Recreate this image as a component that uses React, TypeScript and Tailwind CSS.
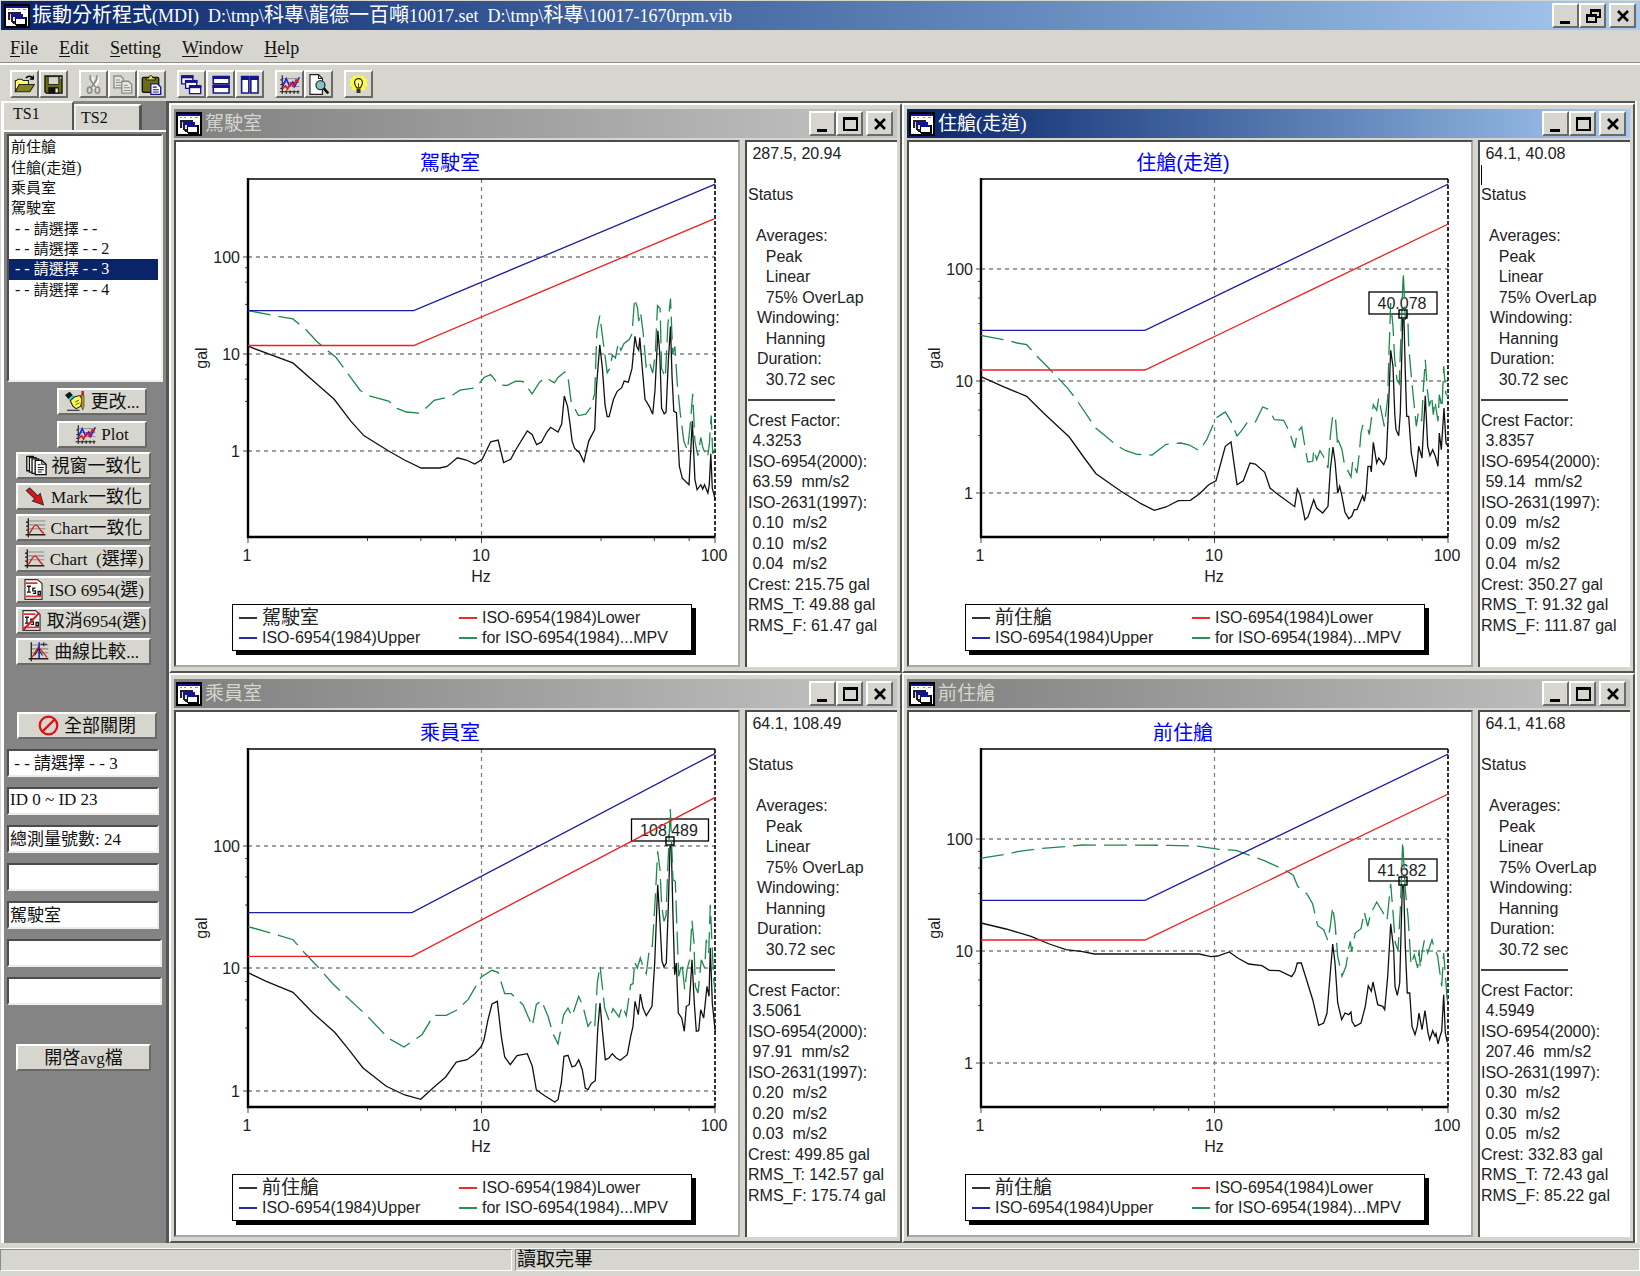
import React from "react";

const SERIF = "font-['Liberation_Serif','Noto_Sans_CJK_TC',serif]";
const SANS = "font-['Liberation_Sans','Noto_Sans_CJK_TC',sans-serif]";
const RAISED = "border-2 border-t-white border-l-white border-r-[#6a6a68] border-b-[#6a6a68] bg-[#d6d5ce]";
const SUNKEN = "border-2 border-t-[#4c4c4c] border-l-[#4c4c4c] border-r-[#eeede8] border-b-[#eeede8] bg-white";

/* Text whose Chinese runs are set a little larger than the Latin ones. */
function Mixed({ text, cjk }: { text: string; cjk: string }) {
  const parts = text.split(/([\u2e80-\u9fff]+)/);
  return (
    <span className="whitespace-pre">
      {parts.map((p, i) => (i % 2 ? <span key={i} className={cjk}>{p}</span> : p))}
    </span>
  );
}

/* ---------- icons ---------- */

function Icon16({ children, className = "size-[21px]" }: { children: React.ReactNode; className?: string }) {
  return (
    <svg viewBox="0 0 16 16" className={className + " shrink-0"} aria-hidden="true" fill="none">
      {children}
    </svg>
  );
}

function AppIcon() {
  return (
    <svg viewBox="0 0 26 24" className="h-6 w-[26px] shrink-0" aria-hidden="true" shapeRendering="crispEdges">
      <rect width="26" height="24" fill="#000" />
      <rect x="2" y="2" width="22" height="20" fill="#fff" />
      <rect x="2" y="2" width="22" height="2" fill="#14148c" />
      <path d="M4 5h2v1H4zM8 5h2v1H8zM14 5h2v1h-2zM19 5h3v1h-3z" fill="#8a8ab0" />
      <path d="M4 8h13v2H6v6H4z" fill="#222" />
      <rect x="6" y="10" width="12" height="6" fill="#ddd" />
      <path d="M7 10h12v3H7z" fill="#14148c" />
      <path d="M7 13h2v4h2v3H9l-2-3z" fill="#222" />
      <rect x="11" y="13" width="11" height="2" fill="#14148c" />
      <rect x="12" y="15" width="10" height="6" fill="#fff" />
      <path d="M11 15h1v6h-1zM21 13h2v9h-2zM12 20h10v2H12z" fill="#000" />
    </svg>
  );
}

const OpenIcon = () => (
  <Icon16>
    <path d="M1 13V5h1l1-1h3l1 1h4v3H5z" fill="#ffff66" stroke="#222" strokeWidth=".8" />
    <path d="M1 13.5 4 8h11.5l-3.5 5.5z" fill="#84841c" stroke="#222" strokeWidth=".8" />
    <path d="M9 3.2c1.500-2 4-2 5.200 0M14.700 1.200v2.600h-2.600" stroke="#000" strokeWidth="1" />
  </Icon16>
);
const SaveIcon = () => (
  <Icon16>
    <path d="M1.500 1.500h13v13h-12l-1-1z" fill="#6c6c10" stroke="#111" />
    <path d="M4 2h8v6H4z" fill="#d6d5ce" stroke="#111" strokeWidth=".6" />
    <path d="M4 10h8v5H4z" fill="#111" />
    <path d="M9.500 11h1.800v3H9.500zM13 2.500h1v1h-1z" fill="#eee" />
  </Icon16>
);
const CutIcon = () => (
  <Icon16>
    <path d="M6.500 1.500v3l3.500 6M10.500 1.500v3L7 10.500" stroke="#fff" strokeWidth="1.200" transform="translate(1 1)" />
    <path d="M5.500 1v3l4 6M10.500 1v3l-4 6" stroke="#8a8a88" strokeWidth="1.200" />
    <ellipse cx="5" cy="12.300" rx="1.700" ry="2.300" stroke="#8a8a88" strokeWidth="1.200" />
    <ellipse cx="11" cy="12.300" rx="1.700" ry="2.300" stroke="#8a8a88" strokeWidth="1.200" />
  </Icon16>
);
const CopyIcon = () => (
  <Icon16>
    <path d="M1.500 1.500h5l2 2v7h-7z" fill="#e6e6e2" stroke="#8a8a88" />
    <path d="M3 4.500h3M3 6.500h4M3 8.500h4" stroke="#8a8a88" strokeWidth=".8" />
    <path d="M7.500 5.500h5l2.500 2.500v6.500H7.500z" fill="#e6e6e2" stroke="#8a8a88" />
    <path d="M9 8.500h3M9 10.500h5M9 12.500h5" stroke="#8a8a88" strokeWidth=".8" />
  </Icon16>
);
const PasteIcon = () => (
  <Icon16>
    <rect x="1" y="2.500" width="12.500" height="11.500" rx="1" fill="#6c6c10" stroke="#111" />
    <path d="M4 4.500V3h2c0-2.400 3-2.400 3 0h2v1.500z" fill="#dede60" stroke="#111" strokeWidth=".7" />
    <path d="M7.500 7.500h5L15 10v5.500H7.500z" fill="#fff" stroke="#14148c" />
    <path d="M9 10h3M9 12h4.500M9 13.700h4.500" stroke="#14148c" strokeWidth=".8" />
  </Icon16>
);
const CascadeIcon = () => (
  <Icon16>
    <path d="M.500 1.500h8.500v6H.500z" fill="#fff" stroke="#14148c" />
    <path d="M0 1h9.500v2.300H0z" fill="#14148c" />
    <path d="M3.500 5h8.500v6H3.500z" fill="#fff" stroke="#14148c" />
    <path d="M3 4.500h9.500v2.300H3z" fill="#14148c" />
    <path d="M6.500 9H15v6H6.500z" fill="#fff" stroke="#14148c" />
    <path d="M6 8.500h9.500v2.300H6z" fill="#14148c" />
  </Icon16>
);
const TileHIcon = () => (
  <Icon16>
    <path d="M2.500 2h12v5.500h-12zM2.500 9h12v5.500h-12z" fill="#fff" stroke="#14148c" strokeWidth="1.200" />
    <path d="M2 1.500h13v2.400H2zM2 8.300h13v2.400H2z" fill="#14148c" />
  </Icon16>
);
const TileVIcon = () => (
  <Icon16>
    <path d="M2 2h5.500v12.500H2zM9 2h5.500v12.500H9z" fill="#fff" stroke="#14148c" strokeWidth="1.200" />
    <path d="M1.500 1.500H8V4.500H1.500zM8.500 1.500H15V4.500H8.500z" fill="#14148c" />
  </Icon16>
);
const PlotIcon = () => (
  <Icon16>
    <path d="M3 3.500h12.500M3 6.500h12.500M3 9.500h12.500" stroke="#8a8a88" strokeWidth=".7" />
    <path d="M2.500 1v14M.500 13.500h15M5.500 12.500v2.500M8.500 12.500v2.500M11.500 12.500v2.500M14.500 12.500v2.500M1 4.500h1.500M1 8h1.500M1 11h1.500" stroke="#222" strokeWidth=".9" />
    <path d="M3 9l2.500-5.500L8 9l2.500-3 1.500 3.500 3.500-7" stroke="#2222e0" strokeWidth="1.200" />
    <path d="M3 11l2-2 1.500 2.500L9 7l2 2.500 2-5 2 1" stroke="#e01818" strokeWidth="1.200" />
  </Icon16>
);
const PreviewIcon = () => (
  <Icon16>
    <path d="M1.500.500H8l3 3v12H1.500z" fill="#fff" stroke="#222" strokeWidth=".9" />
    <path d="M8 .500v3h3" stroke="#222" strokeWidth=".8" />
    <circle cx="9.500" cy="8.500" r="3.400" fill="#7fc4c8" stroke="#333" strokeWidth="1" />
    <path d="M12 11l3.500 3.800" stroke="#111" strokeWidth="2" />
  </Icon16>
);
const BulbIcon = () => (
  <Icon16>
    <path d="M8 0l1.500 2L12 .800l.300 2.500L15 4l-1.300 2.300L15.500 8.500l-2.500 1 .200 2.500-3 .500H6l-3-.500.200-2.500-2.500-1 1.800-2.200L1 4l2.700-.700L4 .800 6.500 2z" fill="#ffff30" />
    <path d="M6.500 10.500C6 9 5 8.500 5 6.500a3 3 0 0 1 6 0c0 2-1 2.500-1.500 4z" fill="#ffff80" stroke="#222" strokeWidth=".9" />
    <path d="M6.500 11h3v3.500h-3z" fill="#333" />
    <path d="M8 7v3.500" stroke="#333" strokeWidth=".7" />
  </Icon16>
);
const HandIcon = () => (
  <Icon16>
    <path d="M0 3l3.500-2.500L6 3 2.500 6z" fill="#111" />
    <path d="M2.500 6 6 3l1.500 1.500-3.500 3z" fill="#20c8d0" />
    <path d="M4 7.500 7.500 4.300l4-.800 1.500 3-1 5-3.500 2L6 11.500z" fill="#ffff50" stroke="#222" strokeWidth=".8" />
    <path d="M7.500 8.500l3-1.500M8 10.500l3-1.500" stroke="#222" strokeWidth=".6" />
    <path d="M12.500 0h2v3h-2z" fill="#d02020" />
    <path d="M12.500 3h2v9l-1 2.500-1-2.500z" fill="#c89018" stroke="#222" strokeWidth=".4" />
    <path d="M1.500 14.700H11" stroke="#222" strokeWidth=".8" />
  </Icon16>
);
const PagesIcon = () => (
  <Icon16>
    <path d="M.600 1h5v11h-5z" fill="#fff" stroke="#111" />
    <path d="M2.600 2h5v11h-5z" fill="#fff" stroke="#111" />
    <path d="M4.600 3h5v11h-5z" fill="#fff" stroke="#111" />
    <path d="M7 4h5l3.300 3v8H7z" fill="#fff" stroke="#111" />
    <path d="M12 4v3h3M9 7.500h2M9 9.500h4.500M9 11.300h4.500M9 13h3" stroke="#111" strokeWidth=".8" />
  </Icon16>
);
const ArrowIcon = () => (
  <Icon16>
    <path d="M1 3.500 3.500 1.500l6.300 6 1.800-1.800L14 14.500l-8.300-3 1.800-1.700z" fill="#e81010" stroke="#333" strokeWidth=".8" />
  </Icon16>
);
const ChartIcon = () => (
  <Icon16>
    <path d="M3 3h12.500M3 6h12.500M3 9h12.500" stroke="#8a8a88" strokeWidth=".8" />
    <path d="M2.500 1v14.500M.500 13.500h15M.800 4h1.500M.800 7h1.500M.800 10h1.500" stroke="#222" strokeWidth="1" />
    <path d="M3 12.500c2-1 3-6 5.200-6.300s3.300 5.300 6.300 6.300" stroke="#e02020" strokeWidth="1.100" />
  </Icon16>
);
const IsoIcon = ({ off = false }: { off?: boolean }) => (
  <Icon16>
    <path d="M1.500.500h9.500l3.500 3v12h-13z" fill="#fff" stroke="#333" strokeWidth=".9" />
    <path d="M2 3.200h9M2 13.200h12" stroke="#e03030" strokeWidth="1.300" />
    <path d="M3 5.500h3M4.500 5.500v4.500M3 10h3M9.500 7H7.500v2h2v2h-2M11.500 9.500h1.700V12h-1.700z" stroke="#111" strokeWidth="1" />
    {off && <path d="M2 15 14 2" stroke="#e01818" strokeWidth="1.600" />}
  </Icon16>
);
const CompareIcon = () => (
  <Icon16>
    <path d="M3 3h12.500M3 6h12.500M3 9h12.500" stroke="#8a8a88" strokeWidth=".8" />
    <path d="M2.500 1v14.500M.500 13.500h15" stroke="#222" strokeWidth="1" />
    <path d="M3 12.500 8 4.500l6.500 8" stroke="#e02020" strokeWidth="1.100" />
    <path d="M8.500 1v12" stroke="#2222e0" strokeWidth="1.200" />
    <path d="M9.500 2.500h5M12 1v3M5 11l3-5 3 5" stroke="#222" strokeWidth=".8" />
  </Icon16>
);
const BanIcon = () => (
  <Icon16>
    <circle cx="8" cy="8" r="6.700" stroke="#e01010" strokeWidth="1.700" />
    <path d="M3.500 12.500l9-9" stroke="#e01010" strokeWidth="1.700" />
  </Icon16>
);

/* ---------- caption buttons ---------- */

const CAPTION = "flex h-[25px] w-[27px] items-center justify-center " + RAISED;

function CaptionButtons({ restore = false }: { restore?: boolean }) {
  return (
    <div className="flex shrink-0 items-center">
      <button aria-label="Minimize" className={CAPTION}>
        <svg viewBox="0 0 18 18" className="size-[18px]" shapeRendering="crispEdges"><path d="M3 14h10v3H3z" /></svg>
      </button>
      <button aria-label={restore ? "Restore" : "Maximize"} className={CAPTION}>
        <svg viewBox="0 0 18 18" className="size-[18px]" shapeRendering="crispEdges" fillRule="evenodd">
          {restore ? (
            <path d="M6 2h11v9h-4V9h2V5H8v2H6zM2 7h11v9H2zM4 10v4h7v-4z" />
          ) : (
            <path d="M2 2h15v14H2zM4 5v9h11V5z" />
          )}
        </svg>
      </button>
      <button aria-label="Close" className={CAPTION + " ml-[3px]"}>
        <svg viewBox="0 0 18 18" className="size-[18px]"><path d="M4 4l10 10M14 4 4 14" stroke="#000" strokeWidth="2.600" /></svg>
      </button>
    </div>
  );
}

/* ---------- charts ---------- */

type Mark = { label: string; x: number; y: number; w: number };
type Series = { black: string; green: string; upper: string; lower: string };
type Win = {
  title: string;
  legend: string;
  active?: boolean;
  /* origin and scale of the trace coordinates */
  map: { x: number; y: number; sx: number; sy: number };
  decades: [number, number, number];
  mark?: Mark;
  series: Series;
  cursor: string;
  values: string[];
};

const W = 467;
const H = 358;
const DECADE = W / 2;
const MINOR = [3.25, 5.5, 7.75].map((v) => Math.log10(v));

function toPlot(points: string, m: Win["map"]) {
  return points
    .split(" ")
    .map((p) => {
      const [x, y] = p.split(",").map(Number);
      return `${((x - m.x) / m.sx).toFixed(1)},${((y - m.y) / m.sy).toFixed(1)}`;
    })
    .join(" ");
}

function Plot({ win }: { win: Win }) {
  const [y100, y10, y1] = win.decades;
  const step = y1 - y10;
  const minorY = [y100, y10, y1]
    .flatMap((base) => MINOR.map((f) => base - f * step))
    .filter((y) => y > y100 - 1);
  return (
    <svg viewBox="0 36 562 420" className={"block w-full " + SANS} role="img" aria-label={win.title} fontSize="16" fill="#222">
      <g transform="translate(72 37)">
        <g stroke="#808080" strokeWidth="1.300" strokeDasharray="4 4">
          {[y100, y10, y1].map((y) => <line key={y} x1="0" x2={W} y1={y} y2={y} />)}
          <line x1={DECADE} x2={DECADE} y1="0" y2={H} />
        </g>
        <g stroke="#444" strokeWidth="1">
          {[y100, y10, y1].map((y) => <line key={y} x1="-5" x2="0" y1={y} y2={y} />)}
          {minorY.map((y) => <line key={y} x1="-3" x2="0" y1={y} y2={y} />)}
          {[0, 1, 2].map((d) => <line key={d} x1={d * DECADE} x2={d * DECADE} y1={H} y2={H + 6} />)}
          {[0, 1].flatMap((d) => MINOR.map((f) => <line key={d + f} x1={(d + f) * DECADE} x2={(d + f) * DECADE} y1={H} y2={H + 4} />))}
        </g>
        <path d={`M0 0H${W}`} stroke="#000" strokeWidth="1.500" />
        <path d={`M${W} 0V${H}`} stroke="#000" strokeWidth="1.600" strokeDasharray="4 2" />
        <path d={`M0 -1V${H}H${W}`} stroke="#000" strokeWidth="2.400" fill="none" />
        {win.mark && (
          <g>
            <rect x={win.mark.x - win.mark.w / 2} y={win.mark.y - 22} width={win.mark.w} height="22" fill="#fff" stroke="#000" strokeWidth="1.300" />
            <text x={win.mark.x - 1} y={win.mark.y - 5} textAnchor="middle">{win.mark.label}</text>
          </g>
        )}
        <g fill="none" strokeWidth="1.300">
          <polyline points={toPlot(win.series.black, win.map)} stroke="#111" />
          <polyline points={toPlot(win.series.green, win.map)} stroke="#1c8a4c" strokeDasharray="23 8" />
          <polyline points={toPlot(win.series.lower, win.map)} stroke="#f01c1c" />
          <polyline points={toPlot(win.series.upper, win.map)} stroke="#1c1ca4" />
        </g>
        {win.mark && (
          <rect x={win.mark.x - 4} y={win.mark.y - 4} width="8" height="8" fill="none" stroke="#000" strokeWidth="1.400" />
        )}
        <g textAnchor="end">
          <text x="-8" y={y100 + 6}>100</text>
          <text x="-8" y={y10 + 6}>10</text>
          <text x="-8" y={y1 + 6}>1</text>
        </g>
        <g textAnchor="middle">
          <text x="-1" y="382">1</text>
          <text x="233" y="382">10</text>
          <text x="466" y="382">100</text>
          <text x="233" y="403">Hz</text>
          <text transform="translate(-41 179) rotate(-90)">gal</text>
        </g>
      </g>
    </svg>
  );
}

function LegendItem({ color, children }: { color: string; children: React.ReactNode }) {
  return (
    <li className="flex items-center gap-[5px] leading-5">
      <span className={"h-[2px] w-[18px] " + color} />
      {children}
    </li>
  );
}

const BLANK = "\u00a0";

function StatusPane({ win }: { win: Win }) {
  const v = win.values;
  const before = ["Status", BLANK, "  Averages:", "    Peak", "    Linear", "    75% OverLap", "  Windowing:", "    Hanning", "  Duration:", "    30.72 sec"];
  const after = [
    "Crest Factor:", " " + v[0],
    "ISO-6954(2000):", ` ${v[1]}  mm/s2`,
    "ISO-2631(1997):", ` ${v[2]}  m/s2`, ` ${v[3]}  m/s2`, ` ${v[4]}  m/s2`,
    `Crest: ${v[5]} gal`, `RMS_T: ${v[6]} gal`, `RMS_F: ${v[7]} gal`,
  ];
  return (
    <div className="w-[152px] shrink-0 overflow-hidden border-t-2 border-l-2 border-t-[#4c4c4c] border-l-[#4c4c4c] bg-white pt-[2px] pl-px">
      <div className={"grid h-[492px] auto-rows-fr items-center text-base leading-5 whitespace-pre text-[#222] " + SANS}>
        <p>{" " + win.cursor}</p>
        {win.active ? <span className="h-5 w-px bg-black" /> : <p>{BLANK}</p>}
        {before.map((t, i) => <p key={i}>{t}</p>)}
        <hr className="w-[87px] border-t-2 border-[#444]" />
        {after.map((t, i) => <p key={i}>{t}</p>)}
      </div>
    </div>
  );
}

function ChildWindow({ win }: { win: Win }) {
  return (
    <section className="flex min-w-0 flex-col gap-[2px] border-2 border-t-white border-l-white border-r-[#555] border-b-[#555] bg-[#d6d5ce] px-[3px] py-1">
      <header
        className={
          "flex h-[29px] items-center gap-[3px] pr-1 pl-[2px] " +
          (win.active
            ? "bg-linear-to-r from-[#0a246a] to-[#a6caf0] text-white"
            : "bg-linear-to-r from-[#808080] to-[#c4c4c4] text-[#d6d5ce]")
        }
      >
        <AppIcon />
        <h2 className={"flex-1 truncate text-[19px] leading-7 " + SERIF}>{win.title}</h2>
        <CaptionButtons />
      </header>
      <div className="flex flex-1 gap-[5px]">
        <div className="min-w-0 flex-1 border-2 border-t-[#4c4c4c] border-l-[#4c4c4c] border-r-[#a8a8a4] border-b-[#a8a8a4] bg-white">
          <h3 className={"pt-[6px] pr-[14px] text-center text-xl leading-[30px] text-[#0000ff] " + SANS}>{win.title}</h3>
          <Plot win={win} />
          <ul className={"mt-[6px] mr-[46px] mb-[14px] ml-14 grid h-[47px] grid-cols-[220px_1fr] content-center border border-black px-[6px] text-base whitespace-nowrap text-[#222] shadow-[4px_4px_0_#000] " + SANS}>
            <LegendItem color="bg-[#333]"><span className="text-[19px]">{win.legend}</span></LegendItem>
            <LegendItem color="bg-[#f02828]">ISO-6954(1984)Lower</LegendItem>
            <LegendItem color="bg-[#2828a8]">ISO-6954(1984)Upper</LegendItem>
            <LegendItem color="bg-[#28905a]">for ISO-6954(1984)...MPV</LegendItem>
          </ul>
        </div>
        <StatusPane win={win} />
      </div>
    </section>
  );
}

const RIGHT_LIMITS = { upper: "35,512 527,512 1437,73", lower: "35,631 527,631 1437,193" };

const WINDOWS: Win[] = [
  {
    title: "駕駛室",
    legend: "駕駛室",
    map: { x: 212, y: 219, sx: 2.703, sy: 2.751 },
    decades: [78, 175, 272],
    cursor: "287.5, 20.94",
    values: ["4.3253", "63.59", "0.10", "0.10", "0.04", "215.75", "49.88", "61.47"],
    series: {
      upper: "212,581 660,581 1475,233",
      lower: "212,677 660,677 1475,327",
      black:
        "212,679 333,725 395,780 445,825 490,885 525,925 590,966 635,992 680,1014 730,1014 750,1010 778,986 802,992 825,1003 845,990 868,942 888,937 903,999 922,990 935,965 967,912 980,922 992,950 1005,943 1020,915 1030,902 1050,915 1060,893 1067,816 1076,845 1082,890 1088,940 1095,960 1108,972 1120,997 1133,940 1149,908 1154,790 1163,675 1170,740 1177,840 1183,873 1188,873 1200,825 1210,803 1222,793 1229,775 1240,778 1250,740 1258,652 1263,680 1268,690 1271,655 1277,730 1285,825 1297,845 1306,866 1312,800 1320,637 1325,700 1330,850 1337,865 1342,860 1348,720 1354,625 1358,760 1363,858 1370,862 1378,1010 1386,1042 1404,1060 1408,980 1413,885 1420,1045 1426,1074 1436,1060 1441,1072 1446,1060 1455,1083 1459,1060 1463,975 1467,1070 1471,1085 1475,1102",
      green:
        "212,581 280,594 333,604 370,635 400,668 450,710 475,745 515,800 535,814 592,830 615,850 640,860 677,863 700,843 715,828 760,817 785,800 828,793 850,765 868,757 890,785 912,787 935,775 955,776 980,810 1000,778 1017,765 1040,780 1050,765 1068,750 1076,755 1085,830 1105,870 1125,866 1138,848 1149,810 1155,640 1163,595 1170,650 1183,752 1190,740 1197,703 1205,712 1213,670 1220,690 1228,672 1243,660 1250,645 1257,548 1265,575 1268,610 1273,585 1280,640 1288,735 1296,720 1306,753 1313,700 1319,567 1326,575 1330,740 1340,765 1347,620 1354,548 1360,700 1366,680 1372,780 1380,860 1390,940 1400,965 1407,900 1414,810 1420,940 1428,980 1436,930 1442,960 1454,985 1459,950 1464,870 1468,975 1475,960",
    },
  },
  {
    title: "住艙(走道)",
    legend: "前住艙",
    active: true,
    map: { x: 35, y: 58, sx: 3, sy: 3 },
    decades: [90, 202, 314],
    mark: { label: "40.078", x: 422, y: 135, w: 68 },
    cursor: "64.1, 40.08",
    values: ["3.8357", "59.14", "0.09", "0.09", "0.04", "350.27", "91.32", "111.87"],
    series: {
      ...RIGHT_LIMITS,
      black:
        "35,651 100,680 172,710 225,762 300,832 345,895 380,942 455,995 515,1032 555,1052 590,1042 627,1023 663,1022 690,1003 718,975 740,963 768,860 785,847 803,975 822,963 842,910 858,913 886,938 902,985 920,1000 976,1041 984,988 992,1005 1007,1080 1016,1072 1033,1020 1042,1045 1060,1060 1076,1040 1083,930 1091,862 1097,905 1105,1000 1111,980 1118,1010 1127,1058 1138,1077 1147,1070 1155,1050 1163,1050 1180,1008 1185,1025 1190,1000 1196,920 1203,920 1206,937 1212,848 1222,910 1228,895 1243,915 1251,895 1257,760 1264,572 1271,620 1276,760 1280,810 1288,828 1293,760 1300,480 1304,480 1308,640 1312,770 1318,770 1326,880 1340,952 1348,860 1358,895 1368,708 1375,860 1382,888 1390,870 1398,890 1406,920 1410,820 1416,870 1424,745 1430,850 1437,862",
      green:
        "35,527 50,530 118,543 143,550 172,555 205,592 235,622 295,686 320,718 360,777 380,806 443,858 470,873 503,884 548,886 590,854 635,850 660,856 690,873 712,840 740,775 768,757 785,785 803,829 815,815 835,787 858,787 880,742 900,750 915,780 943,782 960,815 976,865 984,818 997,802 1005,850 1015,907 1030,905 1033,870 1042,900 1052,873 1065,895 1076,925 1083,830 1090,768 1098,768 1105,860 1108,845 1118,870 1125,912 1145,952 1150,905 1163,940 1170,880 1175,820 1180,797 1193,797 1200,825 1212,735 1222,752 1228,715 1245,800 1255,715 1258,600 1264,430 1271,500 1276,600 1283,660 1290,672 1295,520 1302,338 1308,480 1315,460 1318,560 1326,650 1335,740 1341,800 1347,760 1357,785 1362,690 1368,600 1374,690 1380,740 1387,710 1392,765 1397,725 1406,785 1410,705 1418,745 1423,620 1429,700 1437,712",
    },
  },
  {
    title: "乘員室",
    legend: "前住艙",
    map: { x: 55, y: 58, sx: 3, sy: 3 },
    decades: [97, 219, 342],
    mark: { label: "108.489", x: 422, y: 92, w: 77 },
    cursor: "64.1, 108.49",
    values: ["3.5061", "97.91", "0.20", "0.20", "0.03", "499.85", "142.57", "175.74"],
    series: {
      upper: "55,549 547,549 1457,71",
      lower: "55,680 547,680 1457,203",
      black:
        "55,729 110,755 190,788 250,850 315,908 355,957 400,1015 470,1070 525,1096 573,1109 610,1075 648,1042 680,997 712,990 735,973 755,950 763,930 775,870 787,823 803,815 815,920 825,982 842,1005 862,978 893,972 908,1010 920,1080 945,1098 975,1117 985,1110 995,1060 1003,980 1015,977 1027,1012 1037,1008 1047,990 1058,1020 1067,1075 1075,1080 1085,1062 1097,1053 1104,900 1111,820 1118,900 1127,990 1138,985 1148,972 1160,985 1172,992 1193,975 1203,920 1210,890 1216,815 1226,855 1232,793 1240,835 1250,858 1267,830 1275,700 1284,465 1291,580 1297,695 1303,712 1310,700 1316,530 1321,350 1325,350 1330,560 1335,735 1340,700 1346,850 1356,865 1364,905 1370,830 1379,825 1387,690 1394,820 1400,905 1407,903 1413,840 1422,865 1432,770 1438,800 1442,655 1448,820 1457,907",
      green:
        "55,591 70,595 137,614 190,630 225,670 265,712 310,763 335,787 403,850 425,872 475,925 523,952 577,915 612,857 650,857 680,842 715,810 755,742 787,722 805,728 825,792 845,792 880,825 908,890 920,825 935,812 955,860 970,912 985,943 1002,855 1015,835 1027,860 1047,800 1060,830 1075,890 1085,875 1095,893 1103,760 1111,708 1118,770 1125,835 1138,872 1150,837 1168,862 1178,830 1190,858 1203,765 1210,762 1215,697 1223,715 1232,685 1240,710 1250,732 1260,650 1268,650 1276,520 1284,365 1291,420 1296,530 1303,575 1309,558 1315,400 1322,238 1330,450 1337,455 1342,600 1347,740 1357,700 1365,780 1372,720 1380,690 1387,573 1393,640 1397,770 1405,790 1415,690 1425,715 1430,630 1437,670 1442,525 1447,640 1452,750 1457,790",
    },
  },
  {
    title: "前住艙",
    legend: "前住艙",
    map: { x: 35, y: 58, sx: 3, sy: 3 },
    decades: [90, 202, 314],
    mark: { label: "41.682", x: 422, y: 132, w: 68 },
    cursor: "64.1, 41.68",
    values: ["4.5949", "207.46", "0.30", "0.30", "0.05", "332.83", "72.43", "85.22"],
    series: {
      ...RIGHT_LIMITS,
      black:
        "35,580 110,598 185,620 240,643 290,660 340,666 375,673 690,673 725,681 745,679 780,667 805,685 838,703 878,708 900,722 930,723 967,741 977,725 984,700 996,700 1010,745 1030,810 1048,887 1063,880 1073,850 1083,730 1090,643 1097,700 1105,820 1117,870 1127,850 1138,855 1145,847 1148,875 1157,890 1175,880 1188,830 1197,768 1206,785 1211,757 1225,825 1240,830 1246,840 1255,740 1264,582 1273,660 1277,770 1284,797 1291,760 1299,470 1303,470 1308,650 1314,790 1321,790 1328,890 1337,915 1344,890 1349,850 1358,900 1367,843 1376,910 1381,930 1390,903 1397,920 1400,912 1406,943 1412,920 1417,905 1423,795 1428,910 1434,938",
      green:
        "35,386 50,383 118,373 143,366 210,357 300,350 340,346 600,347 690,350 750,359 800,362 850,380 885,393 945,420 972,437 985,470 1013,493 1030,523 1045,588 1063,600 1075,632 1083,590 1090,532 1097,580 1105,680 1118,740 1130,710 1138,655 1143,635 1147,665 1158,610 1175,597 1185,547 1195,590 1205,547 1213,535 1222,517 1240,547 1253,572 1264,462 1272,560 1278,640 1286,662 1293,540 1300,335 1308,480 1316,560 1320,620 1325,705 1335,675 1345,715 1349,660 1353,715 1358,670 1365,632 1375,670 1388,630 1395,655 1405,680 1417,770 1423,670 1429,750 1434,815",
    },
  },
];

/* ---------- chrome ---------- */

const TOOLBAR: { name: string; icon: React.ReactNode }[][] = [
  [{ name: "Open", icon: <OpenIcon /> }, { name: "Save", icon: <SaveIcon /> }],
  [{ name: "Cut", icon: <CutIcon /> }, { name: "Copy", icon: <CopyIcon /> }, { name: "Paste", icon: <PasteIcon /> }],
  [{ name: "Cascade", icon: <CascadeIcon /> }, { name: "Tile horizontally", icon: <TileHIcon /> }, { name: "Tile vertically", icon: <TileVIcon /> }],
  [{ name: "Plot", icon: <PlotIcon /> }, { name: "Preview", icon: <PreviewIcon /> }],
  [{ name: "Tip", icon: <BulbIcon /> }],
];

const LIST = ["前住艙", "住艙(走道)", "乘員室", "駕駛室", " - - 請選擇 - -", " - - 請選擇 - - 2", " - - 請選擇 - - 3", " - - 請選擇 - - 4"];

const ACTIONS: { text: string; icon: React.ReactNode }[] = [
  { text: "視窗一致化", icon: <PagesIcon /> },
  { text: "Mark一致化", icon: <ArrowIcon /> },
  { text: "Chart一致化", icon: <ChartIcon /> },
  { text: "Chart  (選擇)", icon: <ChartIcon /> },
  { text: "ISO 6954(選)", icon: <IsoIcon /> },
  { text: "取消6954(選)", icon: <IsoIcon off /> },
  { text: "曲線比較...", icon: <CompareIcon /> },
];

const FIELDS: { label: string; value: string; wide?: boolean }[] = [
  { label: "Selection", value: " - - 請選擇 - - 3" },
  { label: "ID range", value: "ID 0 ~ ID 23" },
  { label: "Channel count", value: "總測量號數: 24" },
  { label: "Note 1", value: "" },
  { label: "Location", value: "駕駛室" },
  { label: "Note 2", value: "", wide: true },
  { label: "Note 3", value: "", wide: true },
];

function SideButton({ text, icon, className }: { text: string; icon?: React.ReactNode; className: string }) {
  return (
    <button className={"flex h-[27px] shrink-0 items-center justify-center gap-[5px] text-[17px] leading-none text-[#111] " + RAISED + " " + SERIF + " " + className}>
      {icon}
      <Mixed text={text} cjk="text-[18px]" />
    </button>
  );
}

function Sidebar() {
  return (
    <aside className={"flex w-[165px] shrink-0 flex-col border-l-[3px] border-white bg-[#848484] " + SERIF}>
      <div role="tablist" className="flex h-[29px] items-stretch text-base leading-none text-[#111]">
        <button role="tab" aria-selected="true" className="w-[70px] border-t-2 border-r-2 border-t-white border-r-[#555] bg-[#d6d5ce] pb-[5px] pl-[9px] text-left">
          TS1
        </button>
        <button role="tab" aria-selected="false" className="mt-[3px] w-[68px] border-t-2 border-r-[3px] border-l-2 border-t-white border-r-[#555] border-l-[#eee] bg-[#d6d5ce] pl-[5px] text-left">
          TS2
        </button>
      </div>
      <div className="flex flex-col border-t-2 border-white pt-[2px]">
        <ul role="listbox" aria-label="Measuring points" className={"mr-[3px] ml-[3px] h-[248px] " + SUNKEN}>
          <div className="grid h-[164px] auto-rows-fr pt-px pr-[3px] text-base leading-5 text-[#111]">
            {LIST.map((t, i) => (
              <li key={t} role="option" aria-selected={i === 6} className={"flex items-center overflow-hidden pl-[2px] " + (i === 6 ? "bg-[#0a246a] text-white" : "")}>
                <Mixed text={t} cjk="text-[15px]" />
              </li>
            ))}
          </div>
        </ul>
        <SideButton text="更改..." icon={<HandIcon />} className="mt-[6px] ml-[53px] w-[90px]" />
        <SideButton text="Plot" icon={<PlotIcon />} className="mt-[6px] ml-[53px] w-[90px]" />
        <div className="mt-1 ml-3 flex w-[135px] flex-col gap-1">
          {ACTIONS.map((a) => <SideButton key={a.text} {...a} className="w-full" />)}
        </div>
        <SideButton text="全部關閉" icon={<BanIcon />} className="mt-[47px] ml-[13px] w-[140px]" />
        <div className="mt-[10px] flex flex-col gap-[10px] pl-[3px]">
          {FIELDS.map((f) => (
            <input
              key={f.label}
              aria-label={f.label}
              defaultValue={f.value}
              className={"h-7 rounded-none pb-[3px] pl-px text-[17px] leading-none text-[#111] " + SUNKEN + (f.wide ? " w-[155px]" : " w-[152px]")}
            />
          ))}
        </div>
        <SideButton text="開啓avg檔" className="mt-[39px] ml-3 w-[135px]" />
      </div>
    </aside>
  );
}

export default function App() {
  return (
    <div className={"flex min-h-screen flex-col bg-[#d6d5ce] text-black " + SERIF}>
      <header className="mt-px ml-px flex h-[29px] items-center gap-[2px] bg-linear-to-r from-[#0a246a] to-[#a6caf0] pr-1 pl-[3px] text-white">
        <AppIcon />
        <h1 className="flex-1 truncate text-[18px] leading-7">
          <Mixed text="振動分析程式(MDI)  D:\tmp\科專\龍德一百噸10017.set  D:\tmp\科專\10017-1670rpm.vib" cjk="text-[20px]" />
        </h1>
        <CaptionButtons restore />
      </header>
      <nav className="flex h-[33px] items-center gap-px border-b border-[#8a8a88] pt-[3px] text-[18px] leading-none text-[#111]">
        {["File", "Edit", "Setting", "Window", "Help"].map((m) => (
          <button key={m} className="px-[10px]">
            <span className="underline underline-offset-2">{m[0]}</span>
            {m.slice(1)}
          </button>
        ))}
      </nav>
      <div className="flex h-[38px] items-center gap-[11px] border-t-2 border-white pt-[2px] pl-[10px]">
        {TOOLBAR.map((group, i) => (
          <div key={i} className="flex">
            {group.map((b) => (
              <button key={b.name} aria-label={b.name} className={"flex h-7 w-[29px] items-center justify-center " + RAISED}>
                {b.icon}
              </button>
            ))}
          </div>
        ))}
      </div>
      <div className="flex flex-1 pl-[1px]">
        <Sidebar />
        <main className="grid min-w-0 flex-1 grid-cols-2 grid-rows-2 border-t-2 border-l-[3px] border-[#555]">
          {WINDOWS.map((w) => <ChildWindow key={w.title} win={w} />)}
        </main>
        <div className="w-[5px] shrink-0 border-l-2 border-white" />
      </div>
      <footer className="mt-[5px] flex h-7 gap-[3px] border-t border-white pb-[5px] text-[#111]">
        <div className="w-[512px] border border-t-[#8a8a88] border-l-[#8a8a88] border-r-white border-b-white" />
        <p className="flex flex-1 items-center border border-t-[#8a8a88] border-l-[#8a8a88] border-r-white border-b-white pb-[2px] pl-px text-[19px] leading-none">讀取完畢</p>
      </footer>
    </div>
  );
}
